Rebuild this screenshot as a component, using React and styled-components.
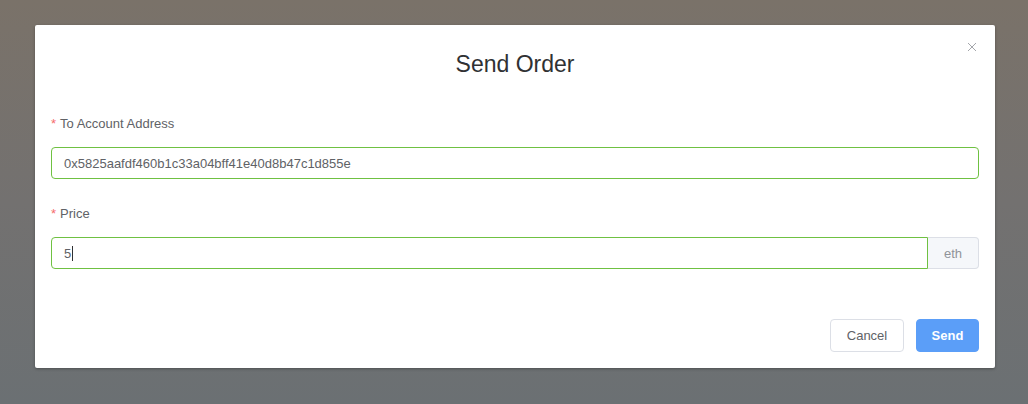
import React from "react";
import styled, { createGlobalStyle } from "styled-components";

const Global = createGlobalStyle`
  html, body {
    margin: 0;
    padding: 0;
  }
  body {
    font-family: "Liberation Sans", Arial, sans-serif;
    -webkit-font-smoothing: antialiased;
  }
`;

const Overlay = styled.div`
  width: 1028px;
  height: 404px;
  background: linear-gradient(180deg, #7a7269 0%, #737170 50%, #6b7073 100%);
  display: flex;
  justify-content: center;
  align-items: flex-start;
  padding: 25px 0 0 2px;
  box-sizing: border-box;
`;

const Dialog = styled.div`
  position: relative;
  width: 960px;
  background: #ffffff;
  border-radius: 2px;
  box-shadow: 0 1px 3px rgba(0, 0, 0, 0.3);
  padding: 0 16px 16px;
  box-sizing: border-box;
`;

const Header = styled.div`
  padding: 27px 0 28px;
  text-align: center;
`;

const Title = styled.h2`
  margin: 0;
  font-size: 23px;
  line-height: 24px;
  font-weight: 400;
  color: #303133;
`;

const Close = styled.button`
  all: unset;
  position: absolute;
  top: 17px;
  right: 18px;
  width: 10px;
  height: 10px;
  cursor: pointer;
  display: flex;
`;

const Form = styled.div`
  display: flex;
  flex-direction: column;
`;

const Item = styled.div`
  display: flex;
  flex-direction: column;
  margin-bottom: 15px;
`;

const Label = styled.label`
  font-size: 13px;
  line-height: 40px;
  color: #606266;
  padding-bottom: 3px;
  &::before {
    content: "*";
    color: #f56c6c;
    margin-right: 4px;
  }
`;

const Group = styled.div`
  display: flex;
`;

const Field = styled.div`
  flex: 1;
  height: 32px;
  box-sizing: border-box;
  border: 1px solid #6fc142;
  border-radius: ${({ $joined }) => ($joined ? "4px 0 0 4px" : "4px")};
  padding: 0 12px;
  display: flex;
  align-items: center;
  font-size: 13px;
  color: #606266;
`;

const Caret = styled.span`
  display: inline-block;
  width: 1px;
  height: 15px;
  background: #303133;
  margin-left: 1px;
`;

const Append = styled.div`
  width: 51px;
  height: 32px;
  box-sizing: border-box;
  background: #f5f7fa;
  border: 1px solid #dcdfe6;
  border-left: none;
  border-radius: 0 4px 4px 0;
  display: flex;
  align-items: center;
  justify-content: center;
  font-size: 13px;
  color: #909399;
`;

const Footer = styled.div`
  display: flex;
  justify-content: flex-end;
  gap: 12px;
  padding-top: 35px;
`;

const Button = styled.button`
  height: 33px;
  box-sizing: border-box;
  padding: 0;
  width: ${({ $primary }) => ($primary ? "63px" : "74px")};
  border-radius: 4px;
  font-family: inherit;
  font-size: 13px;
  font-weight: ${({ $primary }) => ($primary ? 700 : 400)};
  cursor: pointer;
  border: 1px solid ${({ $primary }) => ($primary ? "#5b9ef8" : "#dcdfe6")};
  background: ${({ $primary }) => ($primary ? "#5b9ef8" : "#ffffff")};
  color: ${({ $primary }) => ($primary ? "#ffffff" : "#606266")};
`;

export default function App() {
  return (
    <>
      <Global />
      <Overlay>
        <Dialog>
          <Header>
            <Title>Send Order</Title>
          </Header>
          <Close aria-label="close">
            <svg width="10" height="10" viewBox="0 0 10 10">
              <path d="M1 1L9 9M9 1L1 9" stroke="#a4a6ab" strokeWidth="1" />
            </svg>
          </Close>
          <Form>
            <Item>
              <Label>To Account Address</Label>
              <Group>
                <Field>0x5825aafdf460b1c33a04bff41e40d8b47c1d855e</Field>
              </Group>
            </Item>
            <Item>
              <Label>Price</Label>
              <Group>
                <Field $joined>
                  5<Caret />
                </Field>
                <Append>eth</Append>
              </Group>
            </Item>
          </Form>
          <Footer>
            <Button>Cancel</Button>
            <Button $primary>Send</Button>
          </Footer>
        </Dialog>
      </Overlay>
    </>
  );
}
